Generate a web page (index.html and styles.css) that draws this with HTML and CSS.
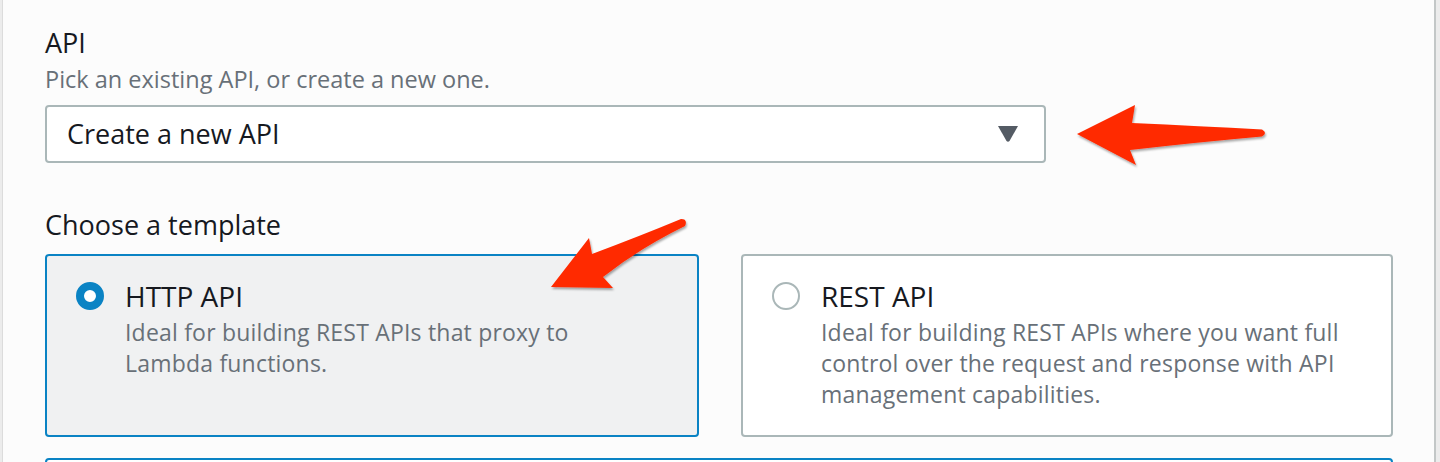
FILE: index.html
```html
<!DOCTYPE html>
<html lang="en">
<head>
<meta charset="utf-8">
<title>API template</title>
<link rel="stylesheet" href="styles.css">
</head>
<body>
<div class="panel">
  <section class="field">
    <h2 class="label">API</h2>
    <p class="hint">Pick an existing API, or create a new one.</p>
    <div class="select">
      <span class="select-value">Create a new API</span>
      <svg class="caret" width="20" height="16" viewBox="0 0 20 16"><path d="M0 0 H20 L11.5 15 Q10 16.5 8.5 15 Z" fill="#545b64"/></svg>
    </div>
  </section>
  <section class="field">
    <h2 class="label label-template">Choose a template</h2>
    <div class="cards">
      <div class="card card-selected">
        <span class="radio radio-on"></span>
        <div class="card-body">
          <div class="card-title">HTTP API</div>
          <div class="card-desc">Ideal for building REST APIs that proxy to<br>Lambda functions.</div>
        </div>
      </div>
      <div class="card">
        <span class="radio"></span>
        <div class="card-body">
          <div class="card-title">REST API</div>
          <div class="card-desc">Ideal for building REST APIs where you want full<br>control over the request and response with API<br>management capabilities.</div>
        </div>
      </div>
    </div>
    <div class="card card-selected card-next"></div>
  </section>
  <svg class="arrows" width="1440" height="462" viewBox="0 0 1440 462">
    <defs>
      <filter id="sh" x="-10%" y="-10%" width="130%" height="140%">
        <feDropShadow dx="1" dy="2" stdDeviation="1" flood-color="#000" flood-opacity="0.35"/>
      </filter>
    </defs>
    <path filter="url(#sh)" fill="#ff2a00" d="M1077 134 L1135 105 L1132 123 Q1200 126 1262 129.5 Q1268 133 1262 136.5 Q1200 142 1130 150 L1136 165 Z"/>
    <path filter="url(#sh)" fill="#ff2a00" d="M551 287 L589 238 L592 254 Q640 236 681 219 Q688 219 685 226 Q640 248 603 277 L613 288 Z"/>
  </svg>
</div>
</body>
</html>
```
FILE: styles.css
```css
html, body {
  margin: 0;
  padding: 0;
}
body {
  width: 1440px;
  height: 462px;
  overflow: hidden;
  background: #ececec;
  font-family: "Open Sans", "Liberation Sans", Arial, sans-serif;
  color: #16191f;
}
.panel {
  position: relative;
  box-sizing: border-box;
  margin-left: 2px;
  width: 1434px;
  height: 462px;
  background: #fcfcfc;
  border-left: 1px solid #dcdcdc;
  border-right: 2px solid #c3c7c7;
  padding: 27px 0 0 42px;
}
.field {
  width: 1348px;
}
.label {
  margin: 0;
  font-size: 27px;
  line-height: 32px;
  font-weight: 400;
  color: #16191f;
}
.hint {
  margin: 6px 0 0;
  font-size: 23.5px;
  line-height: 28px;
  color: #687078;
}
.select {
  box-sizing: border-box;
  margin-top: 12px;
  width: 1001px;
  height: 58px;
  border: 2px solid #aab7b8;
  border-radius: 4px;
  background: #fff;
  display: flex;
  align-items: center;
  justify-content: space-between;
  padding: 0 26px 0 20px;
}
.select-value {
  font-size: 27px;
  line-height: 54px;
}
.caret {
  display: block;
}
.label-template {
  margin-top: 45.5px;
}
.cards {
  margin-top: 13.5px;
  display: grid;
  grid-template-columns: 654px 652px;
  column-gap: 42px;
}
.card {
  box-sizing: border-box;
  height: 183px;
  border: 2px solid #aab7b8;
  border-radius: 4px;
  background: #fff;
  display: flex;
  align-items: flex-start;
  padding: 24px 10px 0 29px;
}
.card-selected {
  border-color: #0a83c4;
  background: #f0f1f2;
}
.radio {
  box-sizing: border-box;
  flex: none;
  width: 28px;
  height: 28px;
  margin-top: 2px;
  border-radius: 50%;
  border: 2px solid #aab7b8;
  background: #fff;
}
.radio-on {
  border: 8.5px solid #0a83c4;
}
.card-body {
  margin-left: 21px;
}
.card-title {
  font-size: 28px;
  line-height: 32px;
  color: #16191f;
}
.card-desc {
  margin-top: 4.5px;
  font-size: 23px;
  line-height: 31px;
  letter-spacing: 0.2px;
  color: #687078;
  white-space: nowrap;
}
.card-next {
  margin-top: 21px;
  height: 60px;
  background: #fff;
}
.arrows {
  position: absolute;
  left: -3px;
  top: 0;
  pointer-events: none;
}
```
